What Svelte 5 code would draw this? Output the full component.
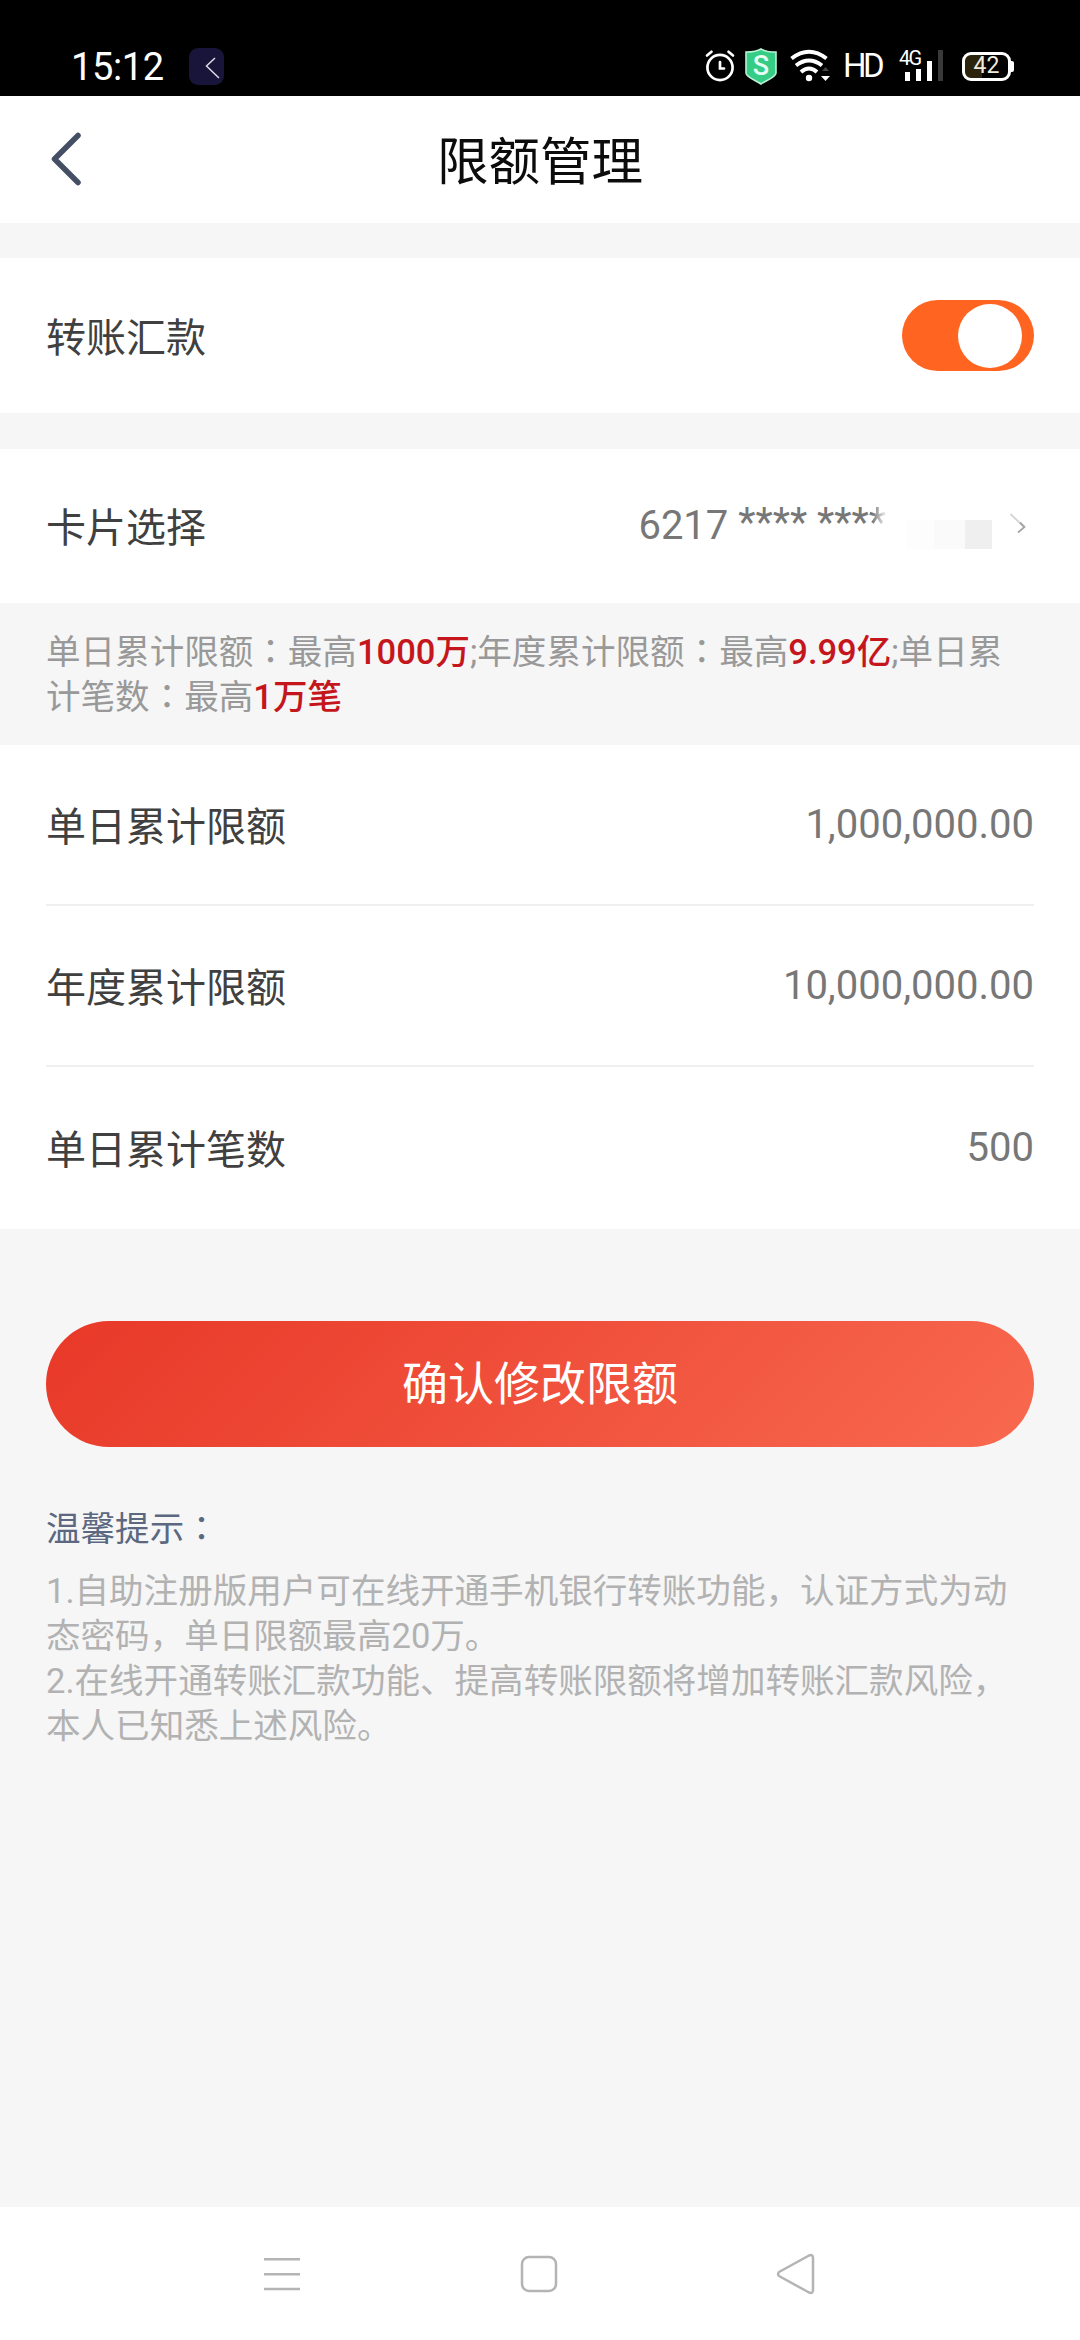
<script>
  const limits = [
    { label: '单日累计限额', value: '1,000,000.00' },
    { label: '年度累计限额', value: '10,000,000.00' },
    { label: '单日累计笔数', value: '500' }
  ];
  let enabled = $state(true);
</script>

<div class="screen">
  <div class="status">
    <span class="time">15:12</span>
    <span class="app-chip">
      <svg width="35" height="37" viewBox="0 0 35 37"><path d="M26 10 L17.5 18 L30 30" fill="none" stroke="#dcdce6" stroke-width="1.5" /></svg>
    </span>
    <span class="spacer"></span>
    <svg class="alarm" width="30" height="34" viewBox="0 0 30 34" fill="none" stroke="#fff" stroke-width="2.7" stroke-linecap="round">
      <circle cx="15" cy="18.5" r="12.6" />
      <path d="M15 13 V19.500 H19 M2 6.5 L6.5 2.8 M28 6.5 L23.5 2.8" />
    </svg>
    <span class="shield">
      <svg width="32" height="37" viewBox="0 0 32 37"><path d="M16 1 C20 3.5 26 4 31 4 V25 C31 29 22 32 16 36 C10 32 1 29 1 25 V4 C6 4 12 3.5 16 1Z" fill="#35cc86" stroke="#b9f2d5" stroke-width="1.6" /></svg>
      <span class="shield-letter">S</span>
    </span>
    <svg class="wifi" width="42" height="34" viewBox="0 0 42 34" fill="none" stroke="#fff" stroke-width="4">
      <path d="M1.500 9.500 Q19 -4 36.500 9.500 M6 16.500 Q19 6.500 32 16.500 M11 23 Q19 16 27 23" />
      <circle cx="19" cy="29" r="3.200" fill="#fff" stroke="none" />
      <path d="M31 27 H40 L35.500 32Z" fill="#fff" stroke="none" />
      <path d="M32 22 L35.500 18 L39 22Z" fill="#444" stroke="none" />
    </svg>
    <span class="hd">HD</span>
    <span class="cell">
      <svg width="46" height="32" viewBox="0 0 46 32">
        <rect x="6" y="22" width="5" height="9" fill="#fff" />
        <rect x="17" y="19" width="5" height="12" fill="#fff" />
        <rect x="28" y="11" width="5" height="20" fill="#fff" />
        <rect x="39" y="0" width="5" height="31" fill="#393939" />
      </svg>
      <span class="cell-type">4G</span>
    </span>
    <span class="battery"><span class="battery-text">42</span></span>
    <span class="battery-tip"></span>
  </div>

  <header>
    <svg class="back" width="32" height="56" viewBox="0 0 32 56"><path d="M28 4.500 L4.500 28 L28 51.500" fill="none" stroke="#444f64" stroke-width="5.500" stroke-linecap="round" stroke-linejoin="round" /></svg>
    <h1>限额管理</h1>
  </header>

  <section class="row transfer">
    <span class="name">转账汇款</span>
    <button class="toggle" class:on={enabled} aria-label="转账汇款" onclick={() => (enabled = !enabled)}><span class="knob"></span></button>
  </section>

  <section class="row card">
    <span class="name label">卡片选择</span>
    <span class="number">6217 <span class="stars">**** ***<span class="fade">*</span></span></span>
    <span class="mosaic"><i></i><i></i><i></i></span>
    <svg width="18" height="24" viewBox="0 0 18 24"><path d="M1.500 1 L15 14" fill="none" stroke="#d4d4d4" stroke-width="1.800" /><path d="M11 9.500 L15.500 14 L9 19.500" fill="none" stroke="#a5a5a5" stroke-width="1.800" /></svg>
  </section>

  <p class="info">单日累计限额<span class="colon">：</span>最高<b>1000万</b>;年度累计限额<span class="colon">：</span>最高<b>9.99亿</b>;单日累<br />计笔数<span class="colon">：</span>最高<b>1万笔</b></p>

  <section class="limits">
    {#each limits as item}
      <div class="limit">
        <span class="name">{item.label}</span>
        <span class="value">{item.value}</span>
      </div>
    {/each}
  </section>

  <button class="confirm">确认修改限额</button>

  <div class="tips">
    <h2>温馨提示<span class="colon">：</span></h2>
    <p>1.自助注册版用户可在线开通手机银行转账功能，认证方式为动<br />态密码，单日限额最高20万。<br />2.在线开通转账汇款功能、提高转账限额将增加转账汇款风险，<br />本人已知悉上述风险。</p>
  </div>

  <nav>
    <svg width="38" height="34" viewBox="0 0 38 34" fill="none" stroke="#b4b4b4" stroke-width="2.500"><path d="M0 2.300 H36 M0 17.300 H36 M0 32 H36" /></svg>
    <svg width="38" height="38" viewBox="0 0 38 38" fill="none" stroke="#b4b4b4" stroke-width="2.500"><rect x="2" y="2" width="34" height="34" rx="7" /></svg>
    <svg width="40" height="42" viewBox="0 0 40 42" fill="none" stroke="#b4b4b4" stroke-width="2.500"><path d="M3 19 Q1.200 21 3 23 L33 39.500 Q37 41 37 37 V5 Q37 1 33 2.500Z" stroke-linejoin="round" /></svg>
  </nav>
</div>

<style>
  :global(body) {
    background: #f6f6f6;
  }
  .screen {
    width: 1080px;
    height: 2340px;
    display: flex;
    flex-direction: column;
    overflow: hidden;
    background: #f6f6f6;
    color: #404040;
    font-family: Roboto, 'Noto Sans CJK SC', sans-serif;
    font-size: 40px;
  }
  .screen * {
    box-sizing: border-box;
  }
  svg {
    display: block;
    flex: none;
  }
  button {
    border: 0;
    padding: 0;
    font-family: inherit;
  }
  .status {
    flex: none;
    height: 96px;
    padding: 36px 66px 0 71px;
    display: flex;
    align-items: center;
    background: #000;
    color: #fff;
  }
  .time {
    width: 118px;
    font-size: 38px;
    line-height: 60px;
    letter-spacing: -0.4px;
    padding-top: 1px;
  }
  .app-chip {
    border-radius: 9px;
    background: #19153a;
  }
  .spacer {
    flex: 1;
  }
  .shield {
    position: relative;
    margin: 0 13px 0 10px;
  }
  .shield-letter {
    position: absolute;
    inset: 0;
    text-align: center;
    font-size: 27px;
    font-weight: 500;
    line-height: 37px;
    color: #e6fff2;
  }
  .hd {
    width: 52px;
    padding: 0 0 0 11px;
    margin-right: 3px;
    font-size: 33px;
    line-height: 60px;
    letter-spacing: -3.5px;
    white-space: nowrap;
  }
  .cell {
    position: relative;
    margin: 0 17px 0 12px;
  }
  .cell-type {
    position: absolute;
    left: 0;
    top: -2px;
    font-size: 20px;
    line-height: 21px;
    letter-spacing: -1.8px;
  }
  .battery {
    width: 49px;
    height: 29px;
    border: 3px solid #fff;
    border-radius: 9px;
    background: linear-gradient(90deg, #2b230c 40%, #000 40%);
    display: flex;
    justify-content: center;
    align-items: center;
  }
  .battery-text {
    font-size: 23px;
    line-height: 24px;
    color: #efebdf;
  }
  .battery-tip {
    width: 3px;
    height: 11px;
    background: #fff;
    border-radius: 0 2px 2px 0;
  }
  header {
    flex: none;
    height: 127px;
    padding: 0 50px;
    display: grid;
    grid-template-columns: 32px 1fr 32px;
    align-items: center;
    background: #fff;
  }
  .back {
    margin-bottom: 1px;
  }
  h1 {
    margin: 6px 0 0;
    text-align: center;
    font-size: 51.500px;
    line-height: 60px;
    font-weight: 400;
    color: #0c0c0c;
  }
  .name {
    padding-bottom: 2px;
  }
  .row {
    flex: none;
    margin-top: 35px;
    padding: 0 46px;
    display: flex;
    align-items: center;
    background: #fff;
  }
  .transfer {
    height: 155px;
    justify-content: space-between;
  }
  .toggle {
    width: 132px;
    height: 71px;
    padding: 3px 12px;
    border-radius: 36px;
    display: flex;
    align-items: center;
    background: #ccc;
  }
  .toggle.on {
    justify-content: flex-end;
    background: #ff6521;
  }
  .knob {
    width: 64px;
    height: 64px;
    border-radius: 50%;
    background: #fff;
  }
  .card {
    height: 154px;
    margin-top: 36px;
  }
  .label {
    flex: 1;
  }
  .number {
    color: #777;
    line-height: 60px;
    white-space: pre;
  }
  .stars {
    line-height: 1;
    vertical-align: 3px;
  }
  .fade {
    background: linear-gradient(90deg, #777 20%, #ddd 85%);
    background-clip: text;
    color: transparent;
  }
  .mosaic {
    display: flex;
    margin: 17px 17px 0 21px;
  }
  .mosaic i {
    width: 27px;
    height: 29px;
    background: #fdfdfd;
  }
  .mosaic i:nth-child(2) {
    width: 31px;
    background: #fafafa;
  }
  .mosaic i:nth-child(3) {
    background: #efefef;
  }
  .card svg {
    margin: 0 7px 2px 0;
  }
  .info {
    flex: none;
    height: 142px;
    margin: 0;
    padding: 27px 46px 0;
    font-size: 34.560px;
    line-height: 45px;
    color: #999;
    white-space: nowrap;
  }
  .colon {
    font-family: 'Noto Sans CJK TC', sans-serif;
    line-height: 1px;
  }
  b {
    font-weight: 500;
    line-height: 1px;
    color: #c4161c;
  }
  .limits {
    flex: none;
    height: 484px;
    padding: 0 46px;
    background: #fff;
  }
  .limit {
    height: 161px;
    display: flex;
    justify-content: space-between;
    align-items: center;
    border-bottom: 2px solid #efefef;
  }
  .limit:last-child {
    border: 0;
  }
  .value {
    color: #777;
  }
  .confirm {
    flex: none;
    margin: 92px 46px 0;
    height: 126px;
    border-radius: 63px;
    background: linear-gradient(135deg, #e83828, #f8694f);
    color: #fff;
    font-size: 46px;
    line-height: 60px;
  }
  .tips {
    flex: 1;
    padding: 60px 46px 0;
    font-size: 34.560px;
    line-height: 45px;
    white-space: nowrap;
  }
  h2 {
    margin: 0 0 17px;
    font-size: inherit;
    font-weight: 400;
    color: #5b6880;
  }
  .tips p {
    margin: 0;
    color: #b2b2b2;
  }
  nav {
    flex: none;
    height: 133px;
    padding: 0 264px;
    display: flex;
    justify-content: space-between;
    align-items: center;
    background: #fff;
  }
</style>
